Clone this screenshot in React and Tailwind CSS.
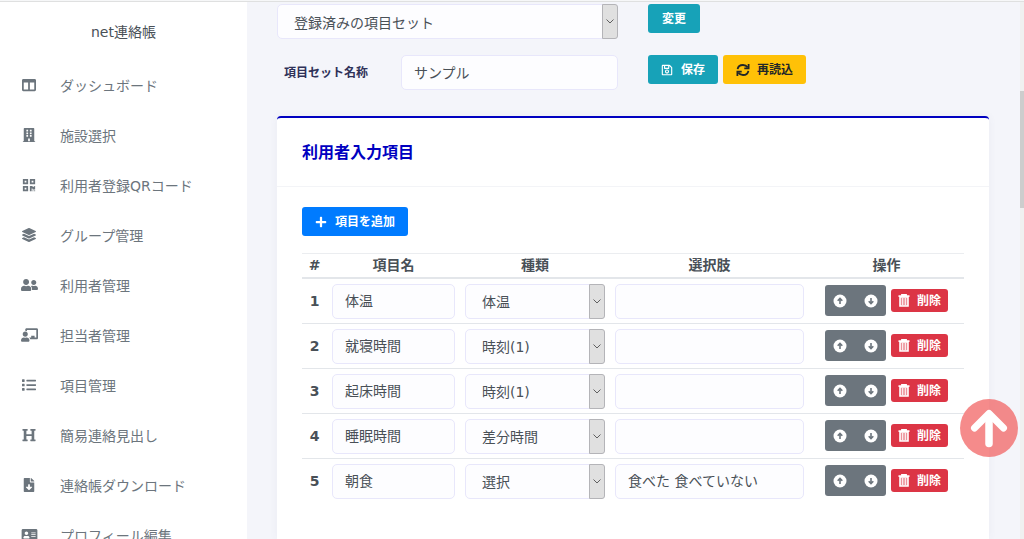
import { useState } from 'react'
import {
  FaColumns,
  FaBuilding,
  FaQrcode,
  FaLayerGroup,
  FaUserFriends,
  FaChalkboardTeacher,
  FaList,
  FaHeading,
  FaFileDownload,
  FaAddressCard,
  FaRegSave,
  FaPlus,
} from 'react-icons/fa'

const MENU = [
  { label: 'ダッシュボード', icon: FaColumns },
  { label: '施設選択', icon: FaBuilding },
  { label: '利用者登録QRコード', icon: FaQrcode },
  { label: 'グループ管理', icon: FaLayerGroup },
  { label: '利用者管理', icon: FaUserFriends, wide: true },
  { label: '担当者管理', icon: FaChalkboardTeacher, wide: true },
  { label: '項目管理', icon: FaList },
  { label: '簡易連絡見出し', icon: FaHeading },
  { label: '連絡帳ダウンロード', icon: FaFileDownload },
  { label: 'プロフィール編集', icon: FaAddressCard, wide: true },
]

const TYPES = ['体温', '時刻(1)', '差分時間', '選択']

const INITIAL_ITEMS = [
  { id: 1, name: '体温', type: '体温', choices: '' },
  { id: 2, name: '就寝時間', type: '時刻(1)', choices: '' },
  { id: 3, name: '起床時間', type: '時刻(1)', choices: '' },
  { id: 4, name: '睡眠時間', type: '差分時間', choices: '' },
  { id: 5, name: '朝食', type: '選択', choices: '食べた 食べていない' },
]

const FIELD = 'h-[35px] w-full rounded-[5px] border border-[#e8e7fb] bg-[#fdfdff] text-sm text-[#495057] outline-none'
const BUTTON = 'flex items-center rounded-[3px] text-xs font-bold whitespace-nowrap'

// ── Icons ────────────────────────────────────────────────────────────
const CircleArrow = ({ down }) => (
  <svg viewBox="0 0 14 14" className={down ? 'size-[14px] rotate-180' : 'size-[14px]'} aria-hidden="true">
    <circle cx="7" cy="7" r="6.5" fill="#fff" />
    <path d="M7 10V5M4.7 6.8 7 4.5l2.3 2.3" fill="none" stroke="#6c757d" strokeWidth="1.6" />
  </svg>
)

const TrashIcon = () => (
  <svg viewBox="0 0 12 13" className="h-[13px] w-3" fill="none" stroke="#fff" aria-hidden="true">
    <path d="M.5 2.2h11M4 2V.8h4V2" strokeWidth="1.8" />
    <path d="M2 3v9h8V3z" fill="#fff" fillOpacity=".45" strokeWidth="1.6" />
    <path d="M4.7 4v7M7.3 4v7" strokeWidth="1" />
  </svg>
)

const ReloadIcon = () => (
  <svg viewBox="0 0 14 14" className="size-[14px]" fill="none" stroke="currentColor" strokeWidth="1.8" aria-hidden="true">
    <path d="M1.6 6.2C2 3.7 4.2 2 7 2c2 0 3.5.8 4.7 2.4M12.4 7.8C12 10.3 9.8 12 7 12c-2 0-3.5-.8-4.7-2.4" />
    <path d="M12.6 1v4.3H8.3M1.4 13V8.7h4.3" />
  </svg>
)

// ── Form parts ───────────────────────────────────────────────────────
const SelectBox = ({ label, value, options, onChange }) => (
  <div className="relative">
    <select
      aria-label={label}
      value={value}
      onChange={(e) => onChange(e.target.value)}
      className={`${FIELD} block appearance-none pt-0.5 pr-5 pl-4`}
    >
      {options.map((o) => (
        <option key={o}>{o}</option>
      ))}
    </select>
    <span className="pointer-events-none absolute inset-y-0 right-0 flex w-4 items-center justify-center rounded-r-[3px] border border-[#b4b4b8] bg-[#e0e0e0]">
      <svg viewBox="0 0 8 5" className="h-[5px] w-2" fill="none" stroke="#606060" aria-hidden="true">
        <path d="m.5.5 3.5 3.5 3.5-3.5" />
      </svg>
    </span>
  </div>
)

// ── Sidebar ──────────────────────────────────────────────────────────
const Sidebar = () => (
  <aside className="w-[247px] shrink-0 bg-white">
    <div className="flex h-[59px] items-center justify-center pt-px text-sm text-[#495057]">net連絡帳</div>
    <nav>
      {MENU.map(({ label, icon: Icon, wide }) => (
        <a key={label} href="#" className="flex h-[50px] items-center pl-5 text-sm text-[#6c757d]">
          <span className="mr-[22px] flex w-[18px] justify-center pb-[3px]">
            <Icon className={wide ? 'h-[14px] w-[17px]' : 'size-[14px]'} />
          </span>
          {label}
        </a>
      ))}
    </nav>
  </aside>
)

// ── Items table ──────────────────────────────────────────────────────
const ItemsTable = ({ items, onUpdate, onMove, onDelete }) => (
  <table className="w-full table-fixed border-collapse text-sm text-[#495057]">
    <colgroup>
      <col className="w-[25px]" />
      <col className="w-[133px]" />
      <col className="w-[150px]" />
      <col />
      <col className="w-[155px]" />
    </colgroup>
    <thead>
      <tr className="h-6 border-t border-b-2 border-[#e3e6ea] border-t-[#ebedf0]">
        {['#', '項目名', '種類', '選択肢', '操作'].map((h) => (
          <th key={h} className="p-0 leading-5 font-bold">{h}</th>
        ))}
      </tr>
    </thead>
    <tbody>
      {items.map((item, i) => (
        <tr key={item.id} className="border-b border-[#e3e6ea] last:border-b-0">
          <th scope="row" className="p-0 text-center font-bold">{i + 1}</th>
          <td className="px-[5px] pt-[5px] pb-1">
            <input
              aria-label="項目名"
              value={item.name}
              onChange={(e) => onUpdate(item.id, { name: e.target.value })}
              className={`${FIELD} block px-3 pb-0.5`}
            />
          </td>
          <td className="px-[5px] pt-[5px] pb-1">
            <SelectBox
              label="種類"
              value={item.type}
              options={TYPES}
              onChange={(type) => onUpdate(item.id, { type })}
            />
          </td>
          <td className="px-[5px] pt-[5px] pb-1">
            <input
              aria-label="選択肢"
              value={item.choices}
              onChange={(e) => onUpdate(item.id, { choices: e.target.value })}
              className={`${FIELD} block px-3 pb-0.5`}
            />
          </td>
          <td className="p-0">
            <div className="flex items-center justify-center gap-[5px]">
              <div className="flex h-[31px] rounded-[3px] bg-[#6c757d]">
                <button aria-label="上へ" onClick={() => onMove(i, -1)} className="flex w-[31px] items-center justify-center">
                  <CircleArrow />
                </button>
                <button aria-label="下へ" onClick={() => onMove(i, 1)} className="flex w-[30px] items-center justify-center">
                  <CircleArrow down />
                </button>
              </div>
              <button onClick={() => onDelete(item.id)} className={`${BUTTON} h-[23px] gap-[7px] bg-[#dc3545] px-[7px] text-white`}>
                <TrashIcon />
                削除
              </button>
            </div>
          </td>
        </tr>
      ))}
    </tbody>
  </table>
)

export default function App() {
  const [items, setItems] = useState(INITIAL_ITEMS)
  const [set, setSet] = useState('登録済みの項目セット')
  const [setName, setSetName] = useState('サンプル')

  const updateItem = (id, patch) => setItems((prev) => prev.map((it) => (it.id === id ? { ...it, ...patch } : it)))
  const deleteItem = (id) => setItems((prev) => prev.filter((it) => it.id !== id))
  const addItem = () => setItems((prev) => [...prev, { id: Date.now(), name: '', type: '体温', choices: '' }])

  const moveItem = (index, step) => {
    const target = index + step
    if (target < 0 || target >= items.length) return
    const next = [...items]
    ;[next[index], next[target]] = [next[target], next[index]]
    setItems(next)
  }

  return (
    <div className="flex h-screen flex-col overflow-hidden bg-[#f4f5fa] font-['DejaVu_Sans','Noto_Sans_CJK_JP',sans-serif]">
      <div className="h-0.5 shrink-0 border-b border-[#dfe0e0] bg-[#f6f7f8]" />
      <div className="flex min-h-0 flex-1">
        <Sidebar />

        <main className="flex min-w-0 flex-1 flex-col pr-[31px] pl-[30px]">
          <div className="grid grid-cols-[341px_1fr] gap-x-[30px] pt-0.5">
            <SelectBox
              label="項目セット"
              value={set}
              options={['登録済みの項目セット']}
              onChange={setSet}
            />
            <div>
              <button className={`${BUTTON} h-[29px] bg-[#17a2b8] px-[14px] text-white`}>変更</button>
            </div>
          </div>

          <div className="grid grid-cols-[341px_1fr] gap-x-[30px] pt-4">
            <div className="flex items-center">
              <label htmlFor="set-name" className="w-[124px] shrink-0 pl-[7px] text-xs font-bold text-[#2f3158]">
                項目セット名称
              </label>
              <input
                id="set-name"
                value={setName}
                onChange={(e) => setSetName(e.target.value)}
                className={`${FIELD} px-3 pb-0.5`}
              />
            </div>
            <div className="flex gap-[5px]">
              <button className={`${BUTTON} h-[29px] gap-2 bg-[#17a2b8] px-[13px] text-white`}>
                <FaRegSave className="size-3" />
                保存
              </button>
              <button className={`${BUTTON} h-[29px] gap-[7px] bg-[#ffc107] px-[13px] text-[#212529]`}>
                <ReloadIcon />
                再読込
              </button>
            </div>
          </div>

          <section className="mt-[26px] flex-1 rounded-t border-t-2 border-[#0000c0] bg-white shadow-[0_0_8px_rgba(80,90,140,0.06)]">
            <h2 className="flex h-[69px] items-center border-b border-[#f3f4f7] px-[25px] pt-0.5 text-base font-bold text-[#0000c0]">
              利用者入力項目
            </h2>
            <div className="px-[25px] pt-5">
              <button onClick={addItem} className={`${BUTTON} mb-[17px] h-[29px] gap-2 bg-[#007bff] px-[13px] text-white`}>
                <FaPlus className="size-3" />
                項目を追加
              </button>
              <ItemsTable items={items} onUpdate={updateItem} onMove={moveItem} onDelete={deleteItem} />
            </div>
          </section>
        </main>

        {/* Scrollbar */}
        <div className="w-1 shrink-0 bg-[#f0f0f0] pt-[89px]">
          <div className="h-[117px] bg-[#cdcdcd]" />
        </div>
      </div>

      {/* Back to top */}
      <button aria-label="トップへ戻る" className="fixed right-1.5 bottom-[82px] size-[58px] rounded-full bg-[#f26464]/75">
        <svg viewBox="0 0 58 58" fill="none" stroke="#fff" strokeLinecap="round" strokeLinejoin="round" aria-hidden="true">
          <path d="M14.5 29 29 14.5 43.5 29" strokeWidth="7" />
          <path d="M29 16v28.5" strokeWidth="7.5" />
        </svg>
      </button>
    </div>
  )
}
